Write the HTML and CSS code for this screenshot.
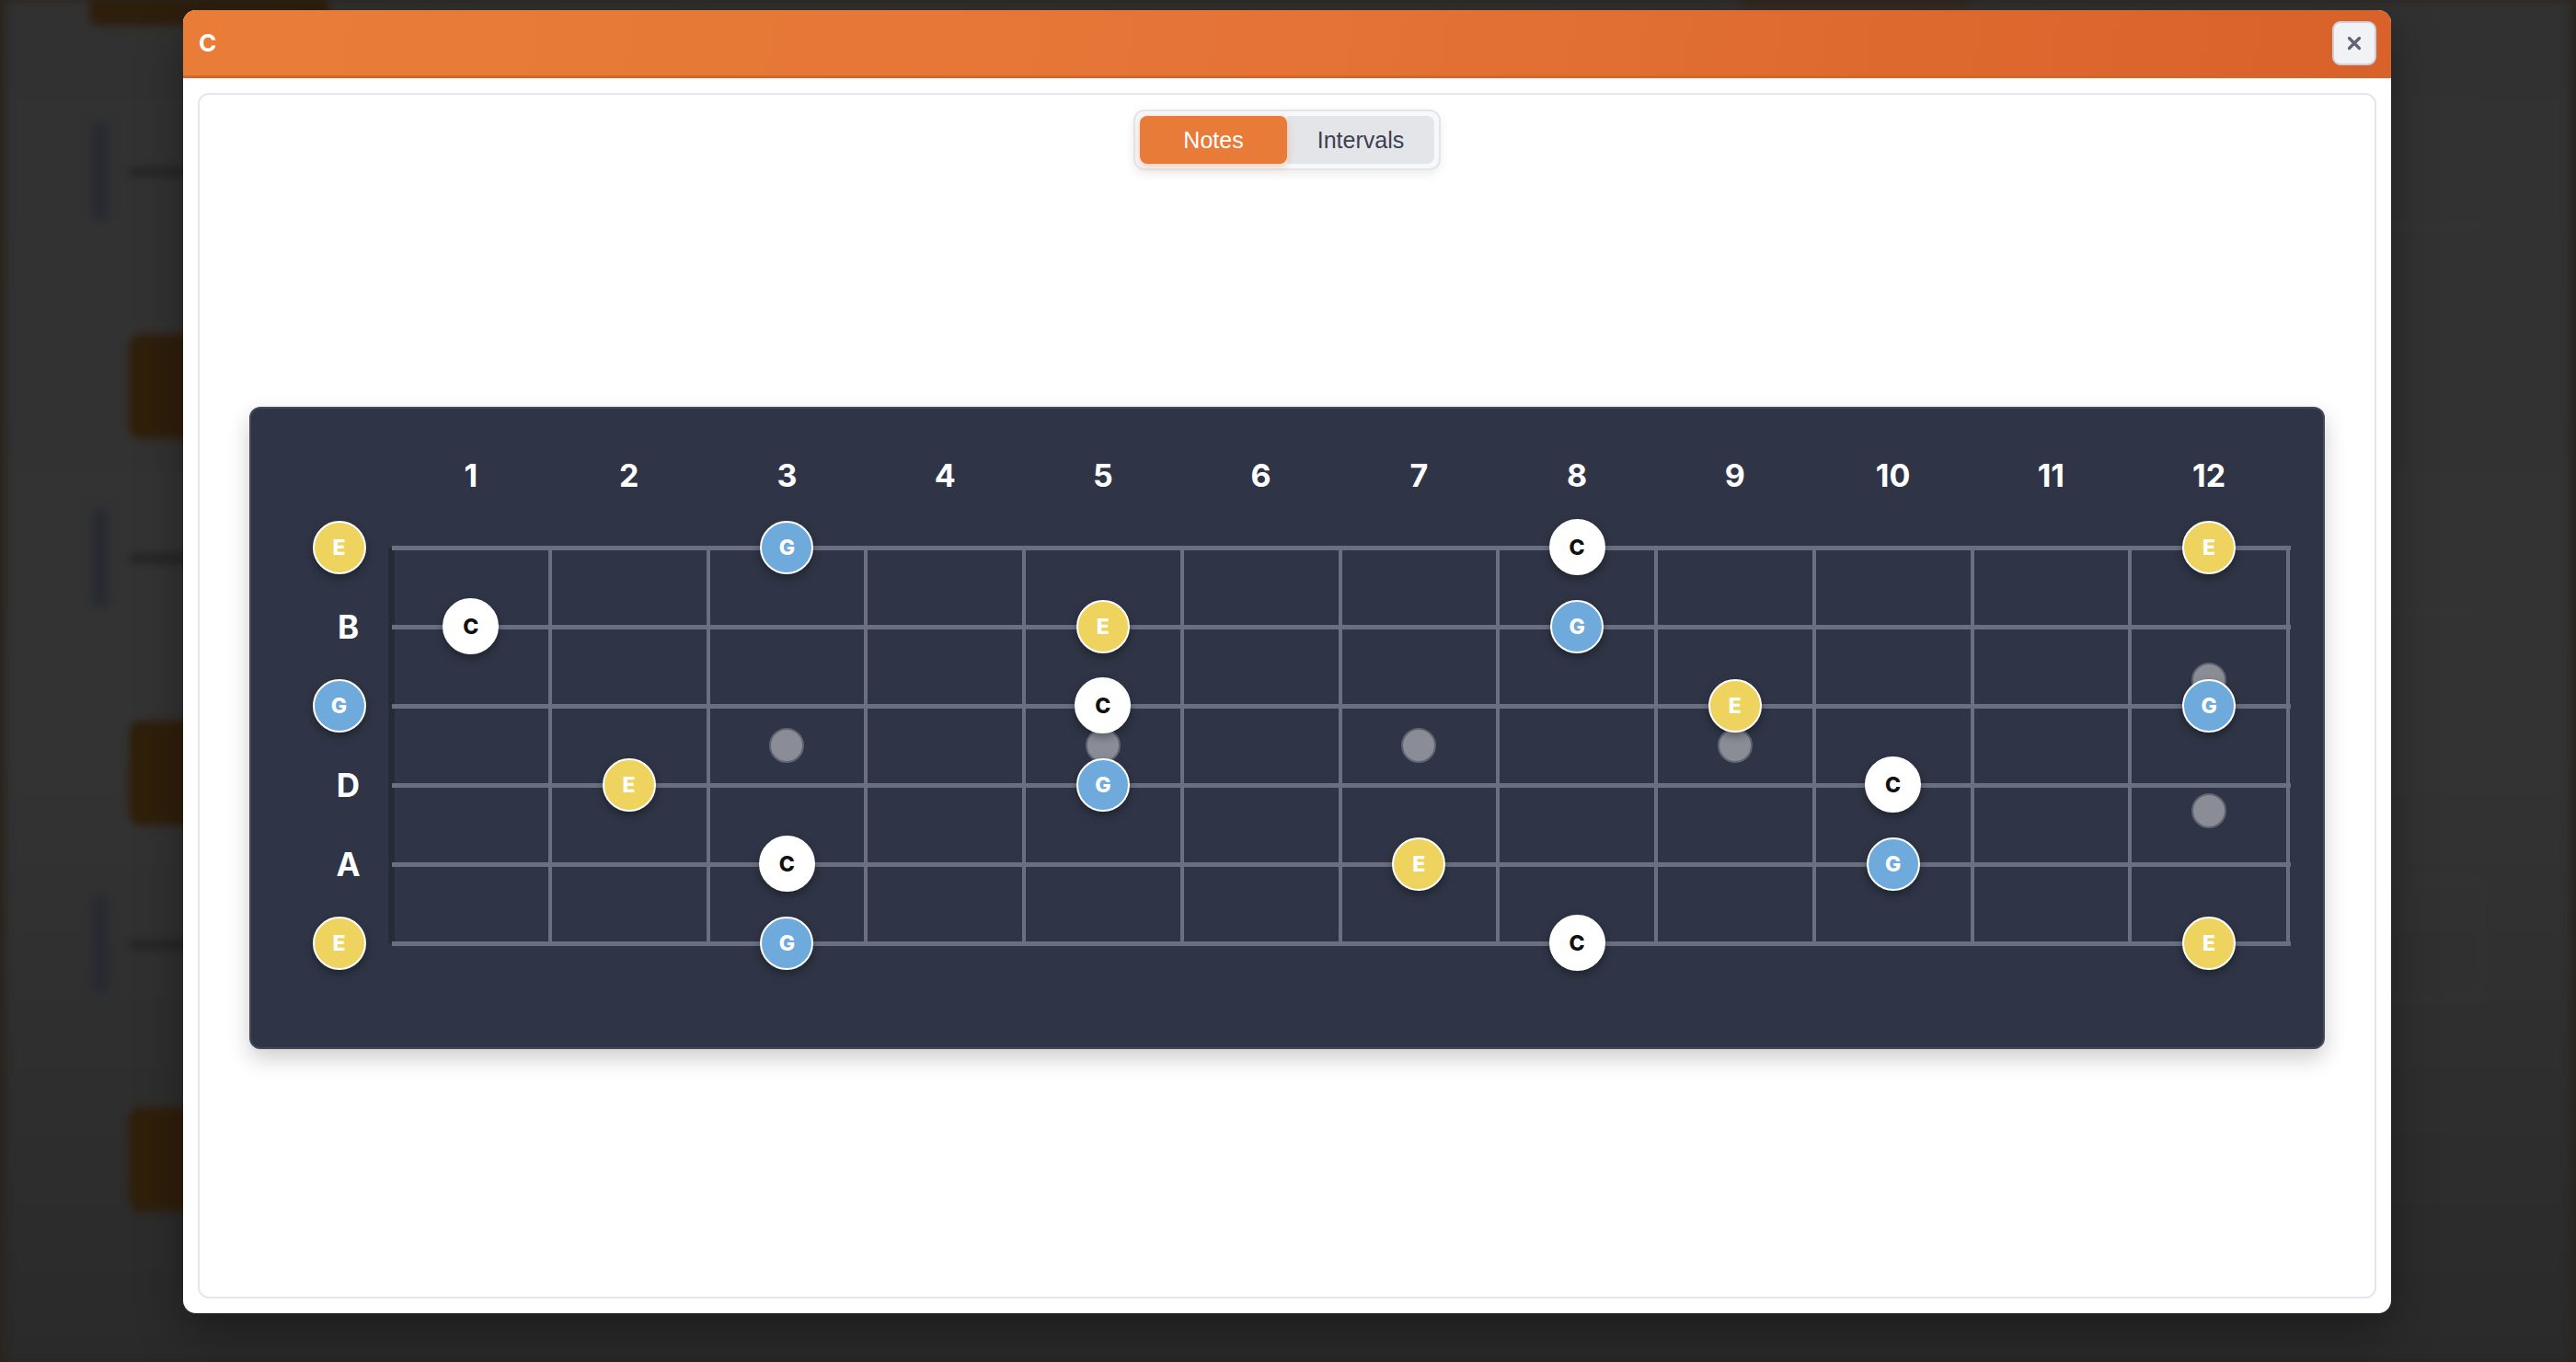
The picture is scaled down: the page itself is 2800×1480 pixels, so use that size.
FILE: index.html
```html
<!DOCTYPE html>
<html lang="en">
<head>
<meta charset="utf-8">
<title>C</title>
<link rel="stylesheet" href="styles.css">
</head>
<body>
<div class="page-bg" aria-hidden="true">
  <div class="bg-topbar">
    <span class="bg-top-a"></span>
    <span class="bg-top-b"></span>
  </div>
  <div class="bg-main">
    <div class="bg-left">
      <div class="bg-row"><span class="bg-bar"></span><span class="bg-line"></span></div>
      <div class="bg-blob"></div>
      <div class="bg-row"><span class="bg-bar"></span><span class="bg-line"></span></div>
      <div class="bg-blob"></div>
      <div class="bg-row"><span class="bg-bar"></span><span class="bg-line"></span></div>
      <div class="bg-blob"></div>
    </div>
    <div class="bg-right">
      <div class="bg-card"></div>
      <div class="bg-card"></div>
      <div class="bg-card"></div>
    </div>
  </div>
</div>

<div class="overlay">
  <div class="modal" role="dialog" aria-label="C">
    <header class="modal-header">
      <h2 class="modal-title">C</h2>
      <button class="close-btn" aria-label="Close">
        <svg width="16" height="16" viewBox="0 0 16 16"><path d="M2.5 2.5 L13.5 13.5 M13.5 2.5 L2.5 13.5" stroke="#5f6374" stroke-width="3.2" stroke-linecap="round" fill="none"/></svg>
      </button>
    </header>
    <div class="modal-body">
      <div class="card">
        <div class="toggle">
          <button class="toggle-btn is-active">Notes</button>
          <button class="toggle-btn toggle-btn--right">Intervals</button>
        </div>
        <div class="stage">
          <div class="fretboard">
            <div class="fret-numbers">
              <span></span>
              <span>1</span><span>2</span><span>3</span><span>4</span><span>5</span><span>6</span>
              <span>7</span><span>8</span><span>9</span><span>10</span><span>11</span><span>12</span>
            </div>
            <div class="neck">
              <div class="neck-lines">
                <div class="frets">
                  <span class="fret"></span><span class="fret"></span><span class="fret"></span><span class="fret"></span>
                  <span class="fret"></span><span class="fret"></span><span class="fret"></span><span class="fret"></span>
                  <span class="fret"></span><span class="fret"></span><span class="fret"></span><span class="fret"></span>
                </div>
                <div class="nut"></div>
                <div class="strings">
                  <span class="string"></span><span class="string"></span><span class="string"></span>
                  <span class="string"></span><span class="string"></span><span class="string"></span>
                </div>
              </div>

              <span class="inlay f3"></span>
              <span class="inlay f5"></span>
              <span class="inlay f7"></span>
              <span class="inlay f9"></span>
              <span class="inlay-pair f12"><span class="inlay-dot"></span><span class="inlay-dot"></span></span>

              <!-- string 1: high E -->
              <span class="note note--E s1 f0">E</span>
              <span class="note note--G s1 f3">G</span>
              <span class="note note--C s1 f8">C</span>
              <span class="note note--E s1 f12">E</span>
              <!-- string 2: B -->
              <span class="string-label s2 f0">B</span>
              <span class="note note--C s2 f1">C</span>
              <span class="note note--E s2 f5">E</span>
              <span class="note note--G s2 f8">G</span>
              <!-- string 3: G -->
              <span class="note note--G s3 f0">G</span>
              <span class="note note--C s3 f5">C</span>
              <span class="note note--E s3 f9">E</span>
              <span class="note note--G s3 f12">G</span>
              <!-- string 4: D -->
              <span class="string-label s4 f0">D</span>
              <span class="note note--E s4 f2">E</span>
              <span class="note note--G s4 f5">G</span>
              <span class="note note--C s4 f10">C</span>
              <!-- string 5: A -->
              <span class="string-label s5 f0">A</span>
              <span class="note note--C s5 f3">C</span>
              <span class="note note--E s5 f7">E</span>
              <span class="note note--G s5 f10">G</span>
              <!-- string 6: low E -->
              <span class="note note--E s6 f0">E</span>
              <span class="note note--G s6 f3">G</span>
              <span class="note note--C s6 f8">C</span>
              <span class="note note--E s6 f12">E</span>
            </div>
          </div>
        </div>
      </div>
    </div>
  </div>
</div>
</body>
</html>
```

FILE: styles.css
```css
* { box-sizing: border-box; }

html, body {
  margin: 0;
  width: 2800px;
  height: 1480px;
}

body {
  position: relative;
  overflow: hidden;
  font-family: "Liberation Sans", Arial, sans-serif;
  background: #2a241e;
}

/* ---------- blurred page behind the modal ---------- */
.page-bg {
  position: absolute;
  inset: 0 6px;
  background: linear-gradient(#313131 0%, #333333 55%, #2a2a2a 100%);
  filter: blur(5px);
  display: flex;
  flex-direction: column;
}

.bg-topbar {
  display: flex;
  align-items: flex-start;
  height: 28px;
}

.bg-top-a {
  margin-left: 91px;
  width: 260px;
  height: 28px;
  background: #2e1e0c;
  border-radius: 0 0 10px 10px;
}

.bg-top-b {
  margin-left: 1536px;
  width: 250px;
  height: 8px;
  background: #34281c;
  border-radius: 0 0 6px 6px;
}

.bg-main {
  flex: 1;
  display: flex;
  justify-content: space-between;
}

.bg-left {
  display: flex;
  flex-direction: column;
  padding-left: 94px;
}

.bg-row {
  display: flex;
  align-items: center;
  gap: 22px;
  height: 109px;
  margin-top: 75px;
}

.bg-row:first-child { margin-top: 104px; }

.bg-bar {
  width: 18px;
  height: 109px;
  border-radius: 8px;
  background: #272a30;
}

.bg-line {
  width: 320px;
  height: 10px;
  border-radius: 5px;
  background: #242424;
}

.bg-blob {
  margin-top: 122px;
  margin-left: 40px;
  width: 320px;
  height: 114px;
  border-radius: 14px;
  background: #2f1f0b;
}

.bg-right {
  display: flex;
  flex-direction: column;
  gap: 290px;
  padding-top: 88px;
  padding-right: 94px;
}

.bg-card {
  width: 120px;
  height: 130px;
  border: 2px solid #373737;
  border-left: 0;
  border-radius: 0 12px 12px 0;
}

/* ---------- modal ---------- */
.overlay {
  position: absolute;
  inset: 0;
}

.modal {
  position: absolute;
  left: 199px;
  top: 11px;
  width: 2400px;
  height: 1416px;
  background: #ffffff;
  border-radius: 14px;
  overflow: hidden;
  display: flex;
  flex-direction: column;
  box-shadow: 0 20px 50px rgba(0, 0, 0, 0.35);
}

.modal-header {
  flex: none;
  height: 74px;
  display: flex;
  align-items: center;
  justify-content: space-between;
  padding: 0 16px 0 17px;
  background: linear-gradient(100deg, #e97d38 0%, #e57536 45%, #d9612a 100%);
  border-bottom: 3px solid #d8642c;
}

.modal-title {
  margin: 0;
  color: #ffffff;
  font-family: Inter, "Liberation Sans", sans-serif;
  font-size: 26px;
  font-weight: 700;
  line-height: 1;
}

.close-btn {
  width: 48px;
  height: 48px;
  padding: 0;
  display: flex;
  align-items: center;
  justify-content: center;
  background: #f1f2f5;
  border: 2px solid #cdd0d8;
  border-radius: 9px;
}

.modal-body {
  flex: 1;
  display: flex;
  padding: 16px;
}

.card {
  flex: 1;
  display: flex;
  flex-direction: column;
  align-items: center;
  padding-top: 16px;
  border: 2px solid #e5e6eb;
  border-radius: 12px;
  background: #ffffff;
}

/* ---------- toggle ---------- */
.toggle {
  display: flex;
  padding: 5px;
  background: #f7f8fa;
  border: 2px solid #e3e5ea;
  border-radius: 12px;
  box-shadow: 0 4px 12px rgba(0, 0, 0, 0.08);
}

.toggle-btn {
  width: 160px;
  height: 52px;
  border: 0;
  border-radius: 8px;
  background: #e4e5e9;
  color: #3b4152;
  font-family: "Liberation Sans", Arial, sans-serif;
  font-size: 25px;
}

.toggle-btn--right { border-radius: 0 8px 8px 0; }

.toggle-btn.is-active {
  position: relative;
  z-index: 1;
  background: #e87b38;
  color: #ffffff;
  box-shadow: 0 3px 8px rgba(232, 123, 56, 0.35);
}

/* ---------- fretboard ---------- */
.stage {
  flex: 1;
  align-self: stretch;
  display: flex;
  align-items: center;
  padding: 0 54px 13px;
}

.fretboard {
  flex: 1;
  padding: 38px 38px 70px;
  background: #2f3546;
  border: 2px solid #434959;
  border-radius: 12px;
  box-shadow: 0 10px 24px rgba(0, 0, 0, 0.2);
  font-family: Inter, "Liberation Sans", sans-serif;
}

.fret-numbers {
  display: grid;
  grid-template-columns: 115px repeat(12, 1fr);
  height: 70px;
  align-items: center;
  text-align: center;
  color: #ffffff;
  font-size: 34px;
  font-weight: 700;
}

.neck {
  position: relative;
  display: grid;
  grid-template-columns: 115px repeat(12, 1fr);
  grid-template-rows: repeat(6, 86px);
}

.neck-lines {
  position: absolute;
  left: 115px;
  right: 0;
  top: 43px;
  bottom: 43px;
}

.frets {
  position: absolute;
  inset: 0;
  display: flex;
}

.fret {
  flex: 1;
  position: relative;
}

.fret::after {
  content: "";
  position: absolute;
  top: 0;
  bottom: 0;
  right: -2px;
  width: 4px;
  background: #6b6f80;
}

.nut {
  position: absolute;
  left: -4px;
  top: 0;
  bottom: 0;
  width: 7px;
  background: #262b38;
}

.strings {
  position: absolute;
  left: 0;
  right: -3px;
  top: -2px;
  bottom: -3px;
  display: flex;
  flex-direction: column;
  justify-content: space-between;
}

.string {
  height: 5px;
  background: #6b6f80;
}

/* grid placement */
.s1 { grid-row: 1; }
.s2 { grid-row: 2; }
.s3 { grid-row: 3; }
.s4 { grid-row: 4; }
.s5 { grid-row: 5; }
.s6 { grid-row: 6; }

.f0 { grid-column: 1; }
.f1 { grid-column: 2; }
.f2 { grid-column: 3; }
.f3 { grid-column: 4; }
.f4 { grid-column: 5; }
.f5 { grid-column: 6; }
.f6 { grid-column: 7; }
.f7 { grid-column: 8; }
.f8 { grid-column: 9; }
.f9 { grid-column: 10; }
.f10 { grid-column: 11; }
.f11 { grid-column: 12; }
.f12 { grid-column: 13; }

.inlay,
.inlay-dot {
  width: 38px;
  height: 38px;
  border-radius: 50%;
  background: #8a8d95;
  border: 2px solid #5f6473;
}

.inlay {
  grid-row: 3 / span 2;
  place-self: center;
  z-index: 1;
}

.inlay-pair {
  grid-row: 3 / span 2;
  place-self: center;
  display: flex;
  flex-direction: column;
  gap: 104px;
  z-index: 1;
}

.note {
  place-self: center;
  z-index: 2;
  width: 58px;
  height: 58px;
  display: flex;
  align-items: center;
  justify-content: center;
  border: 2px solid #ffffff;
  border-radius: 50%;
  color: #ffffff;
  font-size: 23px;
  font-weight: 800;
  box-shadow: 0 4px 10px rgba(0, 0, 0, 0.35);
}

.note--E { background: #eed35f; }
.note--G { background: #6eaadc; }
.note--C {
  width: 61px;
  height: 61px;
  background: #ffffff;
  color: #111111;
}

.string-label {
  place-self: center;
  padding-left: 20px;
  color: #ffffff;
  font-size: 35px;
  font-weight: 700;
}
```
